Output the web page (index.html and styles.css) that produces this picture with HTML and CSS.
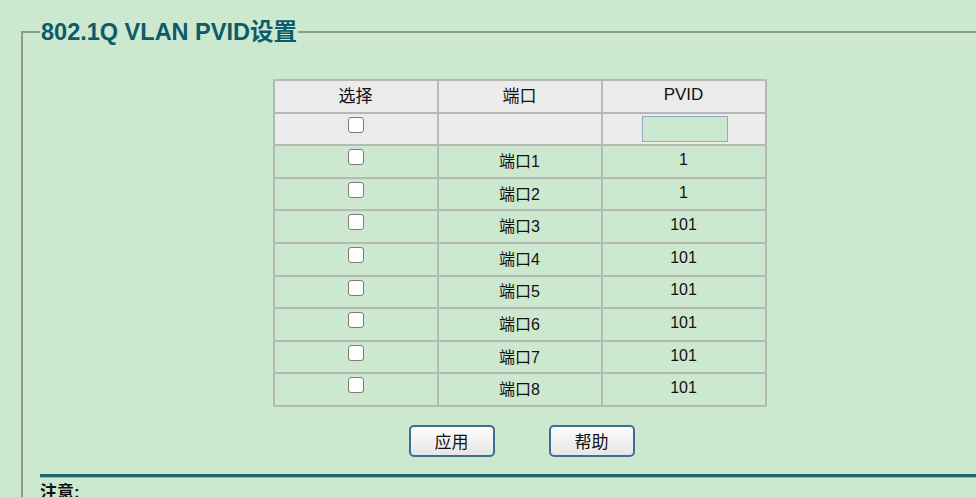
FILE: index.html
```html
<!DOCTYPE html>
<html>
<head>
<meta charset="utf-8">
<link rel="stylesheet" href="styles.css">
</head>
<body>
<fieldset class="panel">
  <legend class="title">802.1Q VLAN PVID设置</legend>
  <table class="grid">
    <tr class="head"><th>选择</th><th>端口</th><th>PVID</th></tr>
    <tr class="head"><td class="sel"><input type="checkbox" class="cb"></td><td></td><td class="sel"><input type="text" class="pvid"></td></tr>
    <tr><td class="sel"><input type="checkbox" class="cb"></td><td>端口1</td><td>1</td></tr>
    <tr><td class="sel"><input type="checkbox" class="cb"></td><td>端口2</td><td>1</td></tr>
    <tr><td class="sel"><input type="checkbox" class="cb"></td><td>端口3</td><td>101</td></tr>
    <tr><td class="sel"><input type="checkbox" class="cb"></td><td>端口4</td><td>101</td></tr>
    <tr><td class="sel"><input type="checkbox" class="cb"></td><td>端口5</td><td>101</td></tr>
    <tr><td class="sel"><input type="checkbox" class="cb"></td><td>端口6</td><td>101</td></tr>
    <tr><td class="sel"><input type="checkbox" class="cb"></td><td>端口7</td><td>101</td></tr>
    <tr><td class="sel"><input type="checkbox" class="cb"></td><td>端口8</td><td>101</td></tr>
  </table>
  <div class="actions">
    <button class="btn">应用</button>
    <button class="btn">帮助</button>
  </div>
  <div class="divider"></div>
  <div class="note">注意:</div>
</fieldset>
</body>
</html>
```
FILE: styles.css
```css
html, body {
  margin: 0;
  padding: 0;
  background: #cce8cf;
  overflow: hidden;
  font-family: "Liberation Sans", "Noto Sans CJK SC", Arial, sans-serif;
}
.panel {
  margin: 18px 0 0 21px;
  width: 1000px;
  padding: 0 0 0 17px;
  border: 2px solid #8d9a92;
  border-right: none;
  border-bottom: none;
  box-sizing: border-box;
}
.title {
  padding: 0 1px;
  font-size: 23.5px;
  font-weight: bold;
  color: #0b5b6b;
  line-height: 28px;
}
.grid {
  margin: 33px auto 0 auto;
  position: relative;
  left: -11px;
  border-collapse: collapse;
  width: 494px;
  font-size: 16px;
  color: #111;
  table-layout: fixed;
}
.grid th, .grid td {
  border: 2px solid #b6b8b6;
  height: 27.6px;
  padding: 0 0 3px 0;
  text-align: center;
  vertical-align: middle;
  font-weight: normal;
}
.grid th { font-size: 17px; }
.grid td.sel { vertical-align: top; padding: 0; height: 30.6px; }
.head th, .head td { background: #ebebeb; }
.cb {
  appearance: none;
  -webkit-appearance: none;
  width: 16px;
  height: 16px;
  box-sizing: border-box;
  margin: 3px 0 0 0;
  border: 1.5px solid #7b7b7b;
  border-radius: 3px;
  background: #fff;
  display: inline-block;
  vertical-align: top;
}
.pvid {
  width: 86px;
  height: 26px;
  box-sizing: border-box;
  border: 1px solid #93aac2;
  background: #cce8cf;
  margin: 2px 0 0 39px;
  display: block;
}
.actions {
  display: flex;
  justify-content: center;
  gap: 54px;
  margin-top: 18px;
  position: relative;
  left: -9px;
}
.btn {
  width: 86px;
  height: 32px;
  border: 2px solid #3f6d93;
  border-radius: 5px;
  background: linear-gradient(#fdfdfd, #e6e6e6);
  font-family: "Liberation Sans", "Noto Sans CJK SC", sans-serif;
  font-size: 17px;
  color: #111;
  padding: 0;
}
.divider {
  margin-top: 17px;
  height: 3px;
  background: #1d6570;
  border-bottom: 1px solid #9fb3a8;
}
.note {
  margin-top: 5px;
  font-size: 17px;
  line-height: 20px;
  font-weight: bold;
  color: #111;
}
```
